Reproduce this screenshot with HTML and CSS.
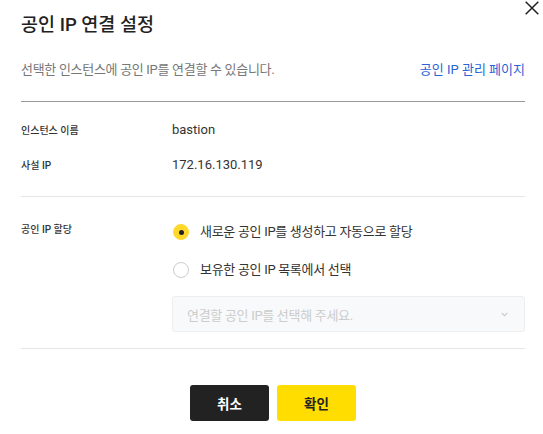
FILE: index.html
```html
<!DOCTYPE html>
<html lang="ko">
<head>
    <meta charset="UTF-8">
    <meta name="viewport" content="width=device-width, initial-scale=1.0">
    <title>공인 IP 연결 설정</title>
    <link rel="stylesheet" href="styles.css">
</head>
<body>
<div class="modal">
    <button class="close-btn" aria-label="닫기">
        <svg width="14" height="14" viewBox="0 0 14 14"><path d="M0.7 0.7L13.3 13.3M13.3 0.7L0.7 13.3" stroke="#222" stroke-width="1.5" fill="none"/></svg>
    </button>
    <h2 class="modal-title">공인 IP 연결 설정</h2>
    <div class="desc-row">
        <span class="desc">선택한 인스턴스에 공인 IP를 연결할 수 있습니다.</span>
        <a class="link" href="#">공인 IP 관리 페이지</a>
    </div>
    <div class="info">
        <div class="info-row">
            <div class="label">인스턴스 이름</div>
            <div class="value">bastion</div>
        </div>
        <div class="info-row">
            <div class="label">사설 IP</div>
            <div class="value">172.16.130.119</div>
        </div>
    </div>
    <div class="assign">
        <div class="label">공인 IP 할당</div>
        <div class="options">
            <label class="radio checked"><span class="dot"></span>새로운 공인 IP를 생성하고 자동으로 할당</label>
            <label class="radio"><span class="dot"></span>보유한 공인 IP 목록에서 선택</label>
            <div class="select">
                <span>연결할 공인 IP를 선택해 주세요.</span>
                <svg width="7" height="5" viewBox="0 0 7 5"><path d="M0.8 1L3.5 3.8L6.2 1" stroke="#c8c8c8" stroke-width="1.1" fill="none"/></svg>
            </div>
        </div>
    </div>
    <div class="actions">
        <button class="btn btn-cancel">취소</button>
        <button class="btn btn-ok">확인</button>
    </div>
</div>
</body>
</html>
```

FILE: styles.css
```css
body {
    margin: 0;
    background: #fff;
    font-family: Roboto, "Noto Sans CJK KR", sans-serif;
    color: #222;
}
.modal {
    position: relative;
    padding: 12px 18px 0 21px;
}
.close-btn {
    position: absolute;
    top: 1px;
    right: 4px;
    padding: 0;
    border: none;
    background: none;
    line-height: 0;
    cursor: pointer;
}
.modal-title {
    margin: 0;
    font-size: 18.5px;
    font-weight: 500;
    line-height: 27px;
}
.desc-row {
    display: flex;
    justify-content: space-between;
    align-items: center;
    margin-top: 21px;
    padding-bottom: 21px;
    border-bottom: 1px solid #999;
    font-size: 13px;
    line-height: 20px;
}
.desc {
    color: #777;
    letter-spacing: -0.3px;
}
.link {
    color: #2b63d6;
    text-decoration: none;
}
.info {
    padding: 10px 0 14px;
    border-bottom: 1px solid #e5e5e5;
}
.info-row {
    display: flex;
    align-items: center;
    height: 35px;
}
.label {
    width: 151px;
    flex-shrink: 0;
    font-size: 10px;
    font-weight: 500;
    color: #333;
}
.value {
    font-size: 13px;
    color: #333;
}
.assign {
    display: flex;
    padding: 25px 0 16px;
    border-bottom: 1px solid #e5e5e5;
}
.assign .label {
    line-height: 16px;
}
.options {
    flex: 1;
    display: flex;
    flex-direction: column;
    gap: 18px;
}
.radio {
    display: flex;
    align-items: center;
    gap: 11px;
    font-size: 13px;
    line-height: 20px;
    letter-spacing: -0.3px;
    color: #333;
}
.dot {
    width: 16px;
    height: 16px;
    margin-left: 1px;
    border: 1px solid #ccc;
    border-radius: 50%;
    box-sizing: border-box;
    display: flex;
    align-items: center;
    justify-content: center;
}
.radio.checked .dot {
    background: #ffd829;
    border-color: #ffd829;
}
.radio.checked .dot::after {
    content: "";
    width: 5px;
    height: 5px;
    border-radius: 50%;
    background: #222;
}
.select {
    display: flex;
    justify-content: space-between;
    align-items: center;
    height: 36px;
    box-sizing: border-box;
    padding: 0 16px 0 14px;
    margin-top: -2px;
    background: #f8f9fa;
    border: 1px solid #eee;
    border-radius: 3px;
    font-size: 13px;
    letter-spacing: -0.3px;
    color: #ccc;
}
.actions {
    display: flex;
    justify-content: center;
    gap: 8px;
    padding-top: 36px;
}
.btn {
    width: 79px;
    height: 36px;
    border: none;
    border-radius: 3px;
    font-family: Roboto, "Noto Sans CJK KR", sans-serif;
    font-size: 13.5px;
    font-weight: 700;
    cursor: pointer;
}
.btn-cancel {
    background: #222;
    color: #fff;
}
.btn-ok {
    background: #ffdd00;
    color: #222;
}
```
